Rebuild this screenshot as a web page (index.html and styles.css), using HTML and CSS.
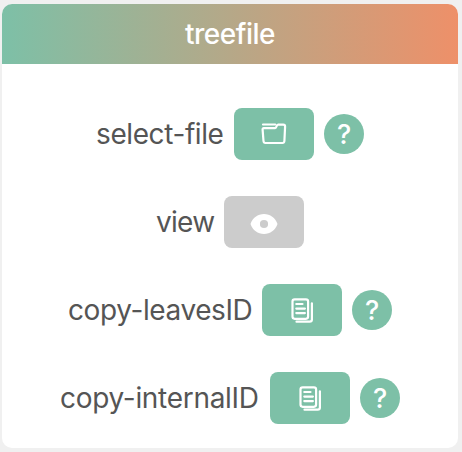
FILE: index.html
```
<!DOCTYPE html>
<html lang="en">
<head>
<meta charset="utf-8">
<title>treefile</title>
<link rel="stylesheet" href="styles.css">
</head>
<body>
<svg class="sprite" aria-hidden="true">
  <symbol id="copy" viewBox="0 0 24 26">
    <rect x="2.500" y="2.300" width="15.600" height="19.500" rx="2.200" stroke-width="2.200"/>
    <path d="M6.300 7h6.200M6.300 11.600h8.600M6.300 16.100h8.600" stroke-width="2.200"/>
    <path d="M21.900 6.300v16.200a2.200 2.200 0 0 1-2.200 2.200H6.500" stroke-width="2.200"/>
  </symbol>
</svg>
<main class="card">
  <header class="card-header">treefile</header>
  <div class="card-body">
    <div class="row">
      <span class="label label-select">select-file</span>
      <button class="action" aria-label="select file"><svg class="icon" width="26" height="24" viewBox="0 0 26 24"><path d="M2 2.500h12.200" stroke-width="2.200"/><path d="M2.700 6.100h11.400c1.800 0 1-3.500 3-3.500h5.200c1.200 0 1.800.7 1.800 1.800L23.400 19c-.1 1.300-.8 2-2 2H4.500c-1.200 0-1.900-.7-2-2L1.600 7.700c-.1-1 .3-1.600 1.100-1.600z" stroke-width="2.200"/></svg></button>
      <span class="help">?</span>
    </div>
    <div class="row">
      <span class="label label-view">view</span>
      <button class="action disabled" aria-label="view"><svg width="28" height="20" viewBox="0 0 28 20"><path fill="#fff" fill-rule="evenodd" d="M14 0C7.800 0 2.700 3.800.5 10c2.200 6.200 7.300 10 13.500 10s11.300-3.800 13.500-10C25.300 3.800 20.200 0 14 0zm0 5.900a4.100 4.100 0 1 1 0 8.200 4.100 4.100 0 0 1 0-8.200z"/></svg></button>
    </div>
    <div class="row">
      <span class="label label-leaves">copy-leavesID</span>
      <button class="action" aria-label="copy leaves ID"><svg class="icon" width="24" height="26"><use href="#copy"/></svg></button>
      <span class="help">?</span>
    </div>
    <div class="row">
      <span class="label label-internal">copy-internalID</span>
      <button class="action" aria-label="copy internal ID"><svg class="icon" width="24" height="26"><use href="#copy"/></svg></button>
      <span class="help">?</span>
    </div>
  </div>
</main>
</body>
</html>
```
FILE: styles.css
```
* { box-sizing: border-box; }
body {
  margin: 0;
  padding: 4px 4px 4px 2px;
  background: #f0f0f0;
  font-family: Inter, "Liberation Sans", sans-serif;
  font-size: 28px;
  color: #555;
}
.sprite { display: none; }
.card {
  height: 444px;
  background: #fff;
  border-radius: 10px;
  overflow: hidden;
}
.card-header {
  height: 60px;
  line-height: 60px;
  text-align: center;
  color: #fff;
  font-weight: 500;
  letter-spacing: -0.5px;
  background: linear-gradient(to right, #7dc0a7, #ee9069);
}
.card-body {
  display: flex;
  flex-direction: column;
  gap: 36px;
  padding-top: 44px;
}
.row {
  display: flex;
  justify-content: center;
  align-items: center;
  gap: 10px;
  height: 52px;
}
.label {
  height: 52px;
  white-space: nowrap;
  line-height: 52px;
  letter-spacing: -0.4px;
}
.label-select { width: 128px; }
.label-view { width: 58px; letter-spacing: -0.7px; }
.label-leaves { width: 184px; }
.label-internal { width: 200px; letter-spacing: -0.3px; }
.action {
  display: flex;
  align-items: center;
  justify-content: center;
  width: 80px;
  height: 52px;
  padding: 0;
  border: 0;
  border-radius: 8px;
  background: #7dc0a7;
}
.disabled { background: #ccc; padding-top: 3px; }
.icon, #copy {
  fill: none;
  stroke: #fff;
  stroke-linecap: round;
  stroke-linejoin: round;
}
.help {
  width: 40px;
  height: 40px;
  border-radius: 50%;
  background: #7dc0a7;
  color: #fff;
  text-align: center;
  line-height: 41px;
  font-size: 27px;
  font-weight: 500;
}
```
